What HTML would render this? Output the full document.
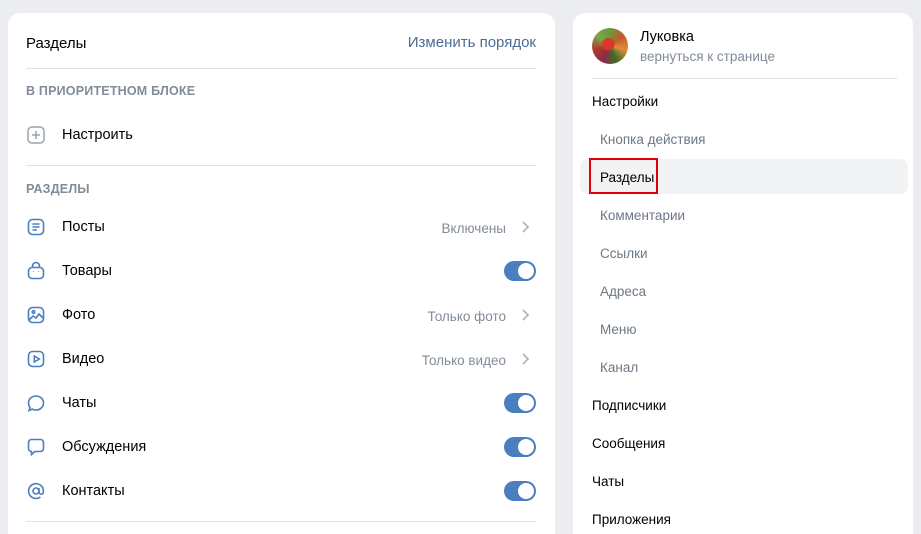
<!DOCTYPE html>
<html><head><meta charset="utf-8"><style>
*{margin:0;padding:0;box-sizing:border-box}
html,body{width:921px;height:534px;overflow:hidden}
body{background:#ebedf0;font-family:"Liberation Sans",sans-serif;position:relative;color:#000}
.card{position:absolute;background:#fff;border-radius:12px 12px 0 0}
.t{position:absolute;white-space:nowrap}
.div{position:absolute;height:1px;background:#dce1e6}
.cap{font-size:12.5px;font-weight:bold;color:#818c99;letter-spacing:.2px}
.row{font-size:14.5px}
.ic{position:absolute;left:26px;width:20px;height:20px}
.val{font-size:13.5px;color:#818c99;right:415px}
.chev{position:absolute;left:520px;width:10px;height:14px}
.tog{position:absolute;left:504px;width:32px;height:20px;border-radius:10px;background:#4a7ec0}
.tog::after{content:"";position:absolute;right:2px;top:2px;width:16px;height:16px;border-radius:50%;background:#fff}
.m{position:absolute;font-size:13.5px;left:592px}
.s{left:600px;color:#6d7885}
</style></head><body>
<div class="card" style="left:8px;top:13px;width:547px;height:521px"></div>
<div class="card" style="left:573px;top:13px;width:340px;height:521px"></div>

<div class="t" style="left:26px;top:35px;font-size:15px">Разделы</div>
<div class="t" style="right:385px;top:34px;font-size:15px;color:#4a6c94">Изменить порядок</div>
<div class="div" style="left:26px;top:68px;width:510px"></div>
<div class="t cap" style="left:26px;top:84px">В ПРИОРИТЕТНОМ БЛОКЕ</div>
<svg class="ic" style="top:125px" viewBox="0 0 20 20" fill="none" stroke="#99a2ad" stroke-width="1.5"><rect x="2" y="2" width="16" height="16" rx="4"/><path d="M10 6v8M6 10h8"/></svg>
<div class="t row" style="left:62px;top:127px">Настроить</div>
<div class="div" style="left:26px;top:165px;width:510px"></div>
<div class="t cap" style="left:26px;top:182px">РАЗДЕЛЫ</div>

<svg class="ic" style="top:217px" viewBox="0 0 20 20" fill="none" stroke="#4a7ec0" stroke-width="1.6"><rect x="2.5" y="2.5" width="15" height="15" rx="4"/><path d="M6.5 7h7M6.5 10h7M6.5 13h4.5"/></svg>
<div class="t row" style="left:62px;top:219px">Посты</div>
<div class="t val" style="top:221px">Включены</div>
<svg class="chev" style="top:220px" viewBox="0 0 10 14" fill="none" stroke="#aeb7c2" stroke-width="1.8"><path d="M3 2l5 5-5 5"/></svg>

<svg class="ic" style="top:261px" viewBox="0 0 20 20" fill="none" stroke="#4a7ec0" stroke-width="1.6"><rect x="2.5" y="6.5" width="15" height="11" rx="3.5"/><path d="M6.5 6.5V5a3.5 3.5 0 0 1 7 0v1.5M7.5 10.5v.5M12.5 10.5v.5"/></svg>
<div class="t row" style="left:62px;top:263px">Товары</div>
<div class="tog" style="top:261px"></div>

<svg class="ic" style="top:305px" viewBox="0 0 20 20" fill="none" stroke="#4a7ec0" stroke-width="1.6"><rect x="2.5" y="2.5" width="15" height="15" rx="4"/><path d="M3 15l4-4 3 2 3-4 4 4"/><circle cx="7.5" cy="7" r="1.3"/></svg>
<div class="t row" style="left:62px;top:307px">Фото</div>
<div class="t val" style="top:309px">Только фото</div>
<svg class="chev" style="top:308px" viewBox="0 0 10 14" fill="none" stroke="#aeb7c2" stroke-width="1.8"><path d="M3 2l5 5-5 5"/></svg>

<svg class="ic" style="top:349px" viewBox="0 0 20 20" fill="none" stroke="#4a7ec0" stroke-width="1.6"><rect x="2.5" y="2.5" width="15" height="15" rx="4"/><path d="M8.3 7v6l5-3z"/></svg>
<div class="t row" style="left:62px;top:351px">Видео</div>
<div class="t val" style="top:353px">Только видео</div>
<svg class="chev" style="top:352px" viewBox="0 0 10 14" fill="none" stroke="#aeb7c2" stroke-width="1.8"><path d="M3 2l5 5-5 5"/></svg>

<svg class="ic" style="top:393px" viewBox="0 0 20 20" fill="none" stroke="#4a7ec0" stroke-width="1.6"><path d="M4 14.5C3 13.2 2.5 11.7 2.5 10c0-4 3.4-7 7.5-7s7.5 3 7.5 7-3.4 7-7.5 7c-1.4 0-2.7-.3-3.8-.9L3 17.5z"/></svg>
<div class="t row" style="left:62px;top:395px">Чаты</div>
<div class="tog" style="top:393px"></div>

<svg class="ic" style="top:437px" viewBox="0 0 20 20" fill="none" stroke="#4a7ec0" stroke-width="1.6"><path d="M5.5 2.5h9a3 3 0 0 1 3 3v6a3 3 0 0 1-3 3H9l-3.5 3v-3a3 3 0 0 1-3-3v-6a3 3 0 0 1 3-3z"/></svg>
<div class="t row" style="left:62px;top:439px">Обсуждения</div>
<div class="tog" style="top:437px"></div>

<svg class="ic" style="top:481px" viewBox="0 0 20 20" fill="none" stroke="#4a7ec0" stroke-width="1.6"><circle cx="10" cy="10" r="3"/><path d="M13 7v4a2.2 2.2 0 0 0 4.4 0v-1a7.4 7.4 0 1 0-3 6"/></svg>
<div class="t row" style="left:62px;top:483px">Контакты</div>
<div class="tog" style="top:481px"></div>
<div class="div" style="left:26px;top:521px;width:510px"></div>

<div style="position:absolute;left:592px;top:28px;width:36px;height:36px;border-radius:50%;background:radial-gradient(circle at 45% 45%,#d6382a 0 22%,transparent 23%),conic-gradient(#6a9a3c,#c45a2a,#e08a3a,#3f6e2a,#8a2a4a,#b03a2a,#7aa84a,#6a9a3c)"></div>
<div class="t" style="left:640px;top:29px;font-size:14.5px">Луковка</div>
<div class="t" style="left:640px;top:49px;font-size:13.5px;color:#818c99">вернуться к странице</div>
<div class="div" style="left:592px;top:78px;width:305px"></div>
<div class="m" style="top:94px">Настройки</div>
<div class="m s" style="top:132px">Кнопка действия</div>
<div style="position:absolute;left:580px;top:159px;width:328px;height:35px;background:#f2f3f5;border-radius:8px"></div>
<div style="position:absolute;left:589px;top:158px;width:69px;height:36px;border:2px solid #e50000"></div>
<div class="m" style="left:600px;top:170px">Разделы</div>
<div class="m s" style="top:208px">Комментарии</div>
<div class="m s" style="top:246px">Ссылки</div>
<div class="m s" style="top:284px">Адреса</div>
<div class="m s" style="top:322px">Меню</div>
<div class="m s" style="top:360px">Канал</div>
<div class="m" style="top:398px">Подписчики</div>
<div class="m" style="top:436px">Сообщения</div>
<div class="m" style="top:474px">Чаты</div>
<div class="m" style="top:512px">Приложения</div>
</body></html>
